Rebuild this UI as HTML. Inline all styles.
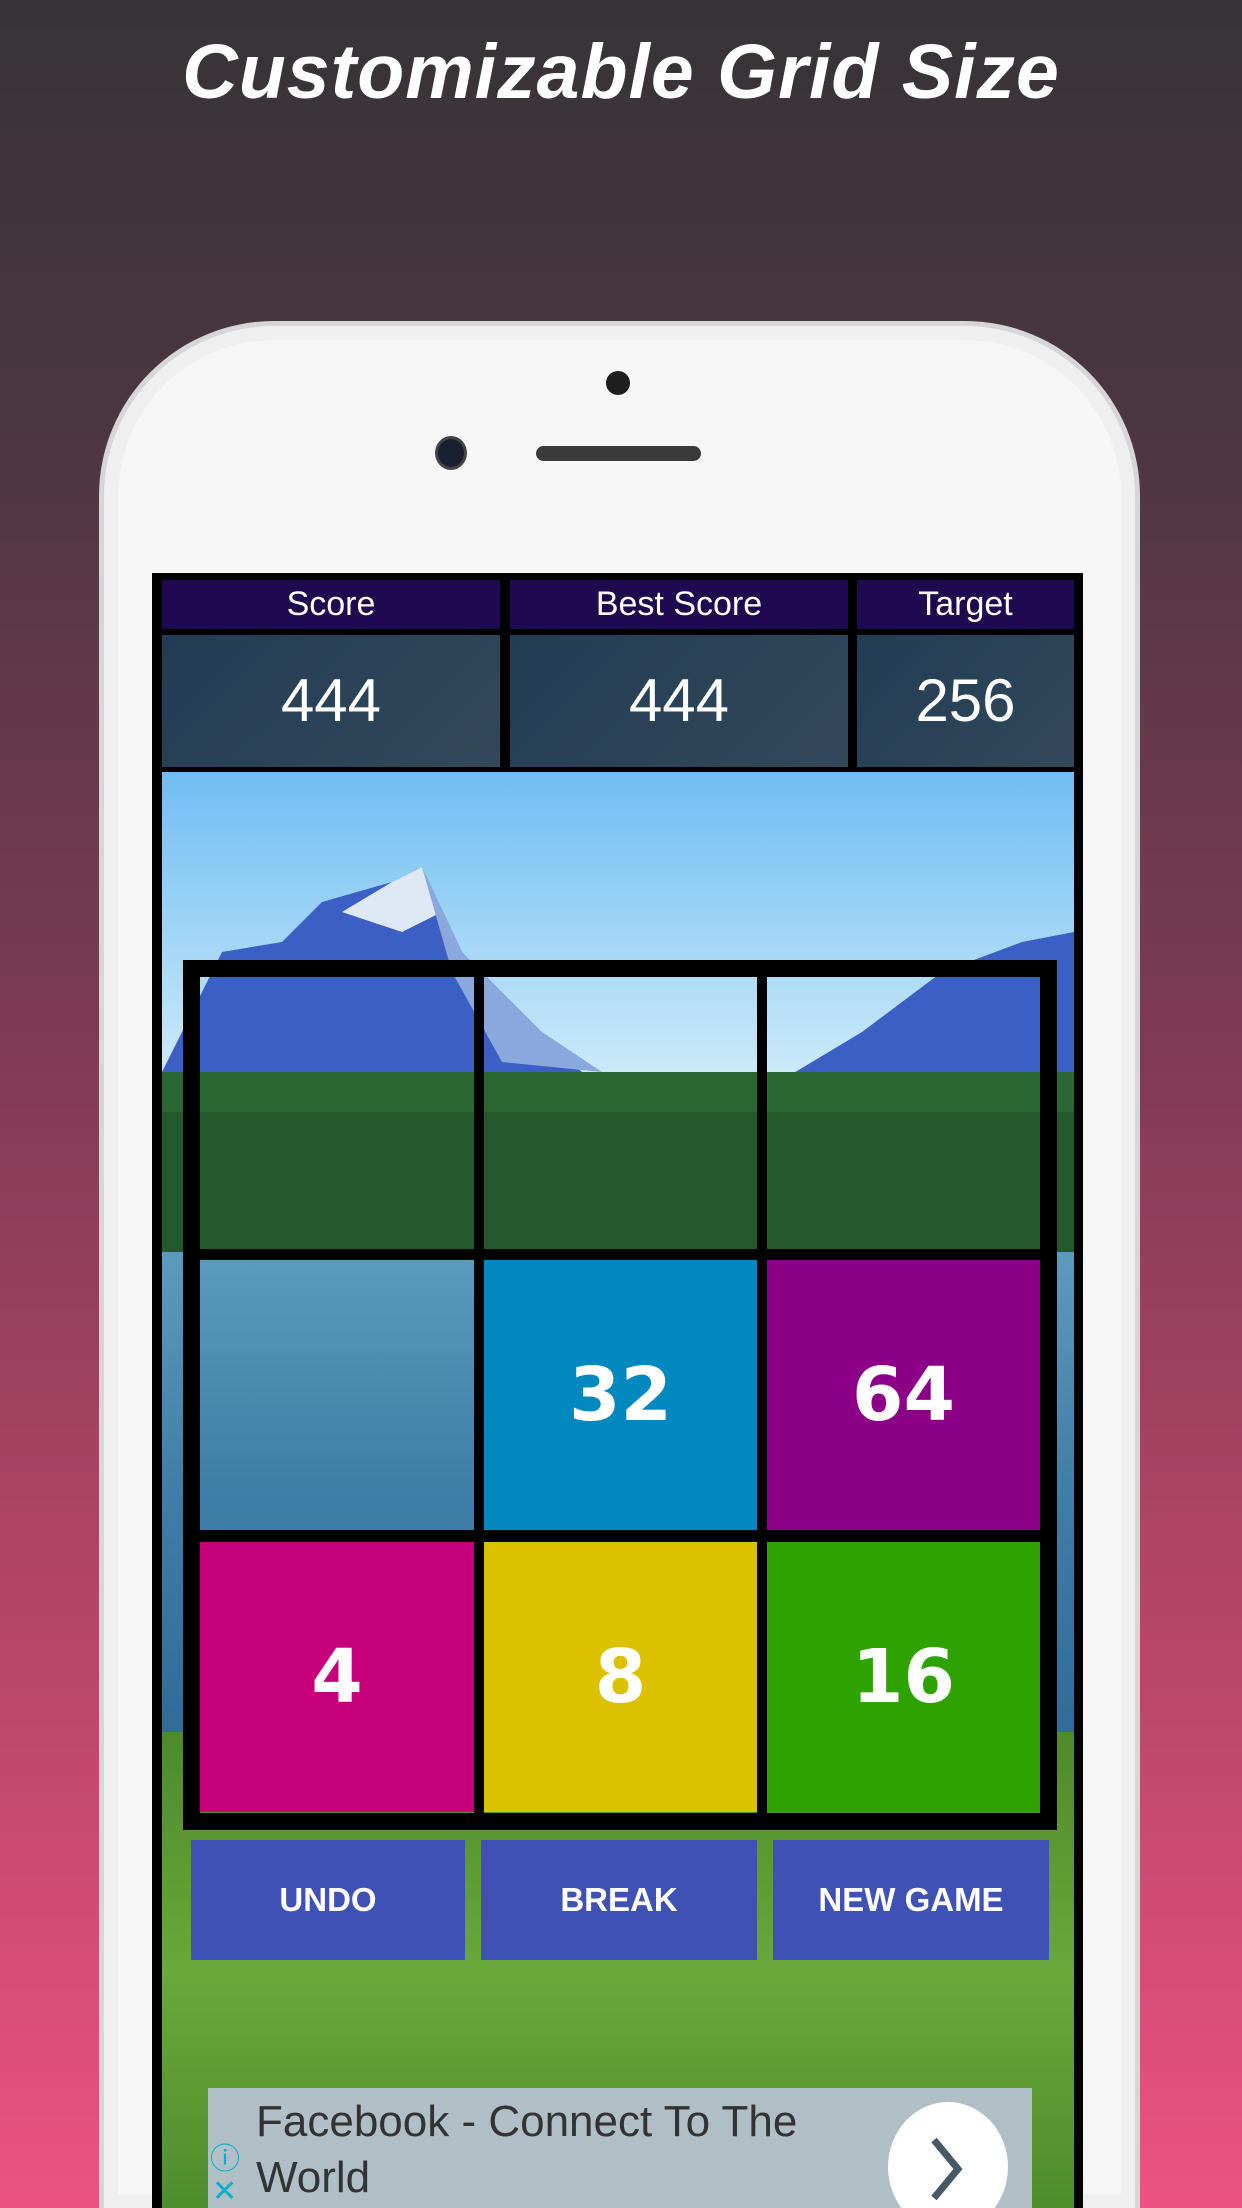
<!DOCTYPE html>
<html style="width:1242px;height:2208px;overflow:hidden"><head><meta charset="utf-8"><style>
*{margin:0;padding:0;box-sizing:border-box}
body{width:1242px;height:2208px;overflow:hidden;position:relative;font-family:"Liberation Sans",sans-serif;
background:linear-gradient(180deg,#363436 0%,#4a3640 18%,#7a3a52 45%,#b8466a 75%,#ec5283 100%);}
.abs{position:absolute}
.title{left:0;width:1242px;top:28px;text-align:center;color:#fff;font-weight:bold;font-style:italic;font-size:77px;letter-spacing:1px}
.phone{left:99px;top:321px;width:1041px;height:1887px;background:#f6f6f6;border-radius:175px 175px 0 0;border:5px solid #d6d6d6;border-bottom:none;box-shadow:inset 0 0 0 14px #efefef}
.lbl{background:#1e0a4e;color:#fff;font-size:34px;text-align:center;line-height:49px;top:580px;height:49px}
.val{background:linear-gradient(135deg,#213c54,#33495a);color:#fff;font-size:60px;text-align:center;line-height:132px;top:635px;height:132px}
.tile{color:#fff;font-weight:bold;font-size:74px;text-align:center;line-height:270px;font-family:"DejaVu Sans","Liberation Sans",sans-serif}
.btn{background:#3f51b5;color:#fff;font-size:33px;font-weight:bold;text-align:center;line-height:120px;top:1840px;height:120px}
</style></head><body>
<div class="abs title">Customizable Grid Size</div>
<div class="abs phone"></div>
<div class="abs" style="left:606px;top:371px;width:24px;height:24px;border-radius:50%;background:#1e1e1e"></div>
<div class="abs" style="left:435px;top:436px;width:32px;height:34px;border-radius:50%;background:#1a2030;border:3px solid #444"></div>
<div class="abs" style="left:536px;top:446px;width:165px;height:15px;border-radius:8px;background:#3a3a3a"></div>
<div class="abs" style="left:152px;top:573px;width:931px;height:1635px;background:#000"></div>
<svg class="abs" style="left:162px;top:772px" width="912" height="1436" viewBox="0 0 912 1436">
<defs>
<linearGradient id="sky" x1="0" y1="0" x2="0" y2="1"><stop offset="0" stop-color="#6fbdf3"/><stop offset="1" stop-color="#d2ecf8"/></linearGradient>
<linearGradient id="lake" x1="0" y1="0" x2="0" y2="1"><stop offset="0" stop-color="#5a9bbd"/><stop offset="0.5" stop-color="#3f7ea6"/><stop offset="1" stop-color="#2f6d98"/></linearGradient>
<linearGradient id="grass" x1="0" y1="0" x2="0" y2="1"><stop offset="0" stop-color="#4d8a2a"/><stop offset="0.5" stop-color="#6aa83a"/><stop offset="1" stop-color="#4e8d2b"/></linearGradient>
</defs>
<rect width="912" height="320" fill="url(#sky)"/>
<polygon points="0,300 60,180 120,170 160,130 230,110 260,95 300,180 360,250 420,300 520,330 600,320 700,260 780,200 860,170 912,160 912,330 0,330" fill="#3b5fc4"/>
<polygon points="180,140 230,110 260,95 280,140 240,160" fill="#dfe9f5"/>
<polygon points="260,95 300,180 380,260 440,300 340,290 290,200" fill="#8aa7de"/>
<rect y="300" width="912" height="180" fill="#24592c"/>
<rect y="300" width="912" height="40" fill="#2f6d35" opacity="0.7"/>
<rect y="480" width="912" height="480" fill="url(#lake)"/>
<rect y="960" width="912" height="480" fill="url(#grass)"/>
</svg>
<div class="abs lbl" style="left:162px;width:338px">Score</div>
<div class="abs lbl" style="left:510px;width:338px">Best Score</div>
<div class="abs lbl" style="left:857px;width:217px">Target</div>
<div class="abs val" style="left:162px;width:338px">444</div>
<div class="abs val" style="left:510px;width:338px">444</div>
<div class="abs val" style="left:857px;width:217px">256</div>
<div class="abs" style="left:183px;top:960px;width:874px;height:870px;border:17px solid #000"></div>
<div class="abs" style="left:474px;top:970px;width:10px;height:850px;background:#000"></div>
<div class="abs" style="left:757px;top:970px;width:10px;height:850px;background:#000"></div>
<div class="abs" style="left:190px;top:1249px;width:860px;height:11px;background:#000"></div>
<div class="abs" style="left:190px;top:1530px;width:860px;height:12px;background:#000"></div>
<div class="abs" style="left:1040px;top:970px;width:17px;height:850px;background:#000"></div>
<div class="abs tile" style="left:484px;top:1260px;width:273px;height:270px;background:#0088bf">32</div>
<div class="abs tile" style="left:767px;top:1260px;width:273px;height:270px;background:#8b0086">64</div>
<div class="abs tile" style="left:200px;top:1542px;width:274px;height:270px;background:#c5007a">4</div>
<div class="abs tile" style="left:484px;top:1542px;width:273px;height:270px;background:#dcc100">8</div>
<div class="abs tile" style="left:767px;top:1542px;width:273px;height:270px;background:#2ea300">16</div>
<div class="abs btn" style="left:191px;width:274px">UNDO</div>
<div class="abs btn" style="left:481px;width:276px">BREAK</div>
<div class="abs btn" style="left:773px;width:276px">NEW GAME</div>
<div class="abs" style="left:208px;top:2088px;width:824px;height:120px;background:#b0bec5;overflow:hidden">
<div class="abs" style="left:48px;top:6px;font-size:44px;color:#333;line-height:56px">Facebook - Connect To The<br>World</div>
<div class="abs" style="left:680px;top:14px;width:120px;height:130px;border-radius:50%;background:#fff"></div>
<svg class="abs" style="left:718px;top:48px" width="40" height="66"><path d="M8 4 L32 33 L8 62" stroke="#455a64" stroke-width="7" fill="none"/></svg>
<div class="abs" style="left:2px;top:46px;font-size:30px;color:#00aecd">ⓘ</div>
<div class="abs" style="left:4px;top:86px;font-size:30px;color:#00aecd">✕</div>
</div>
</body></html>
